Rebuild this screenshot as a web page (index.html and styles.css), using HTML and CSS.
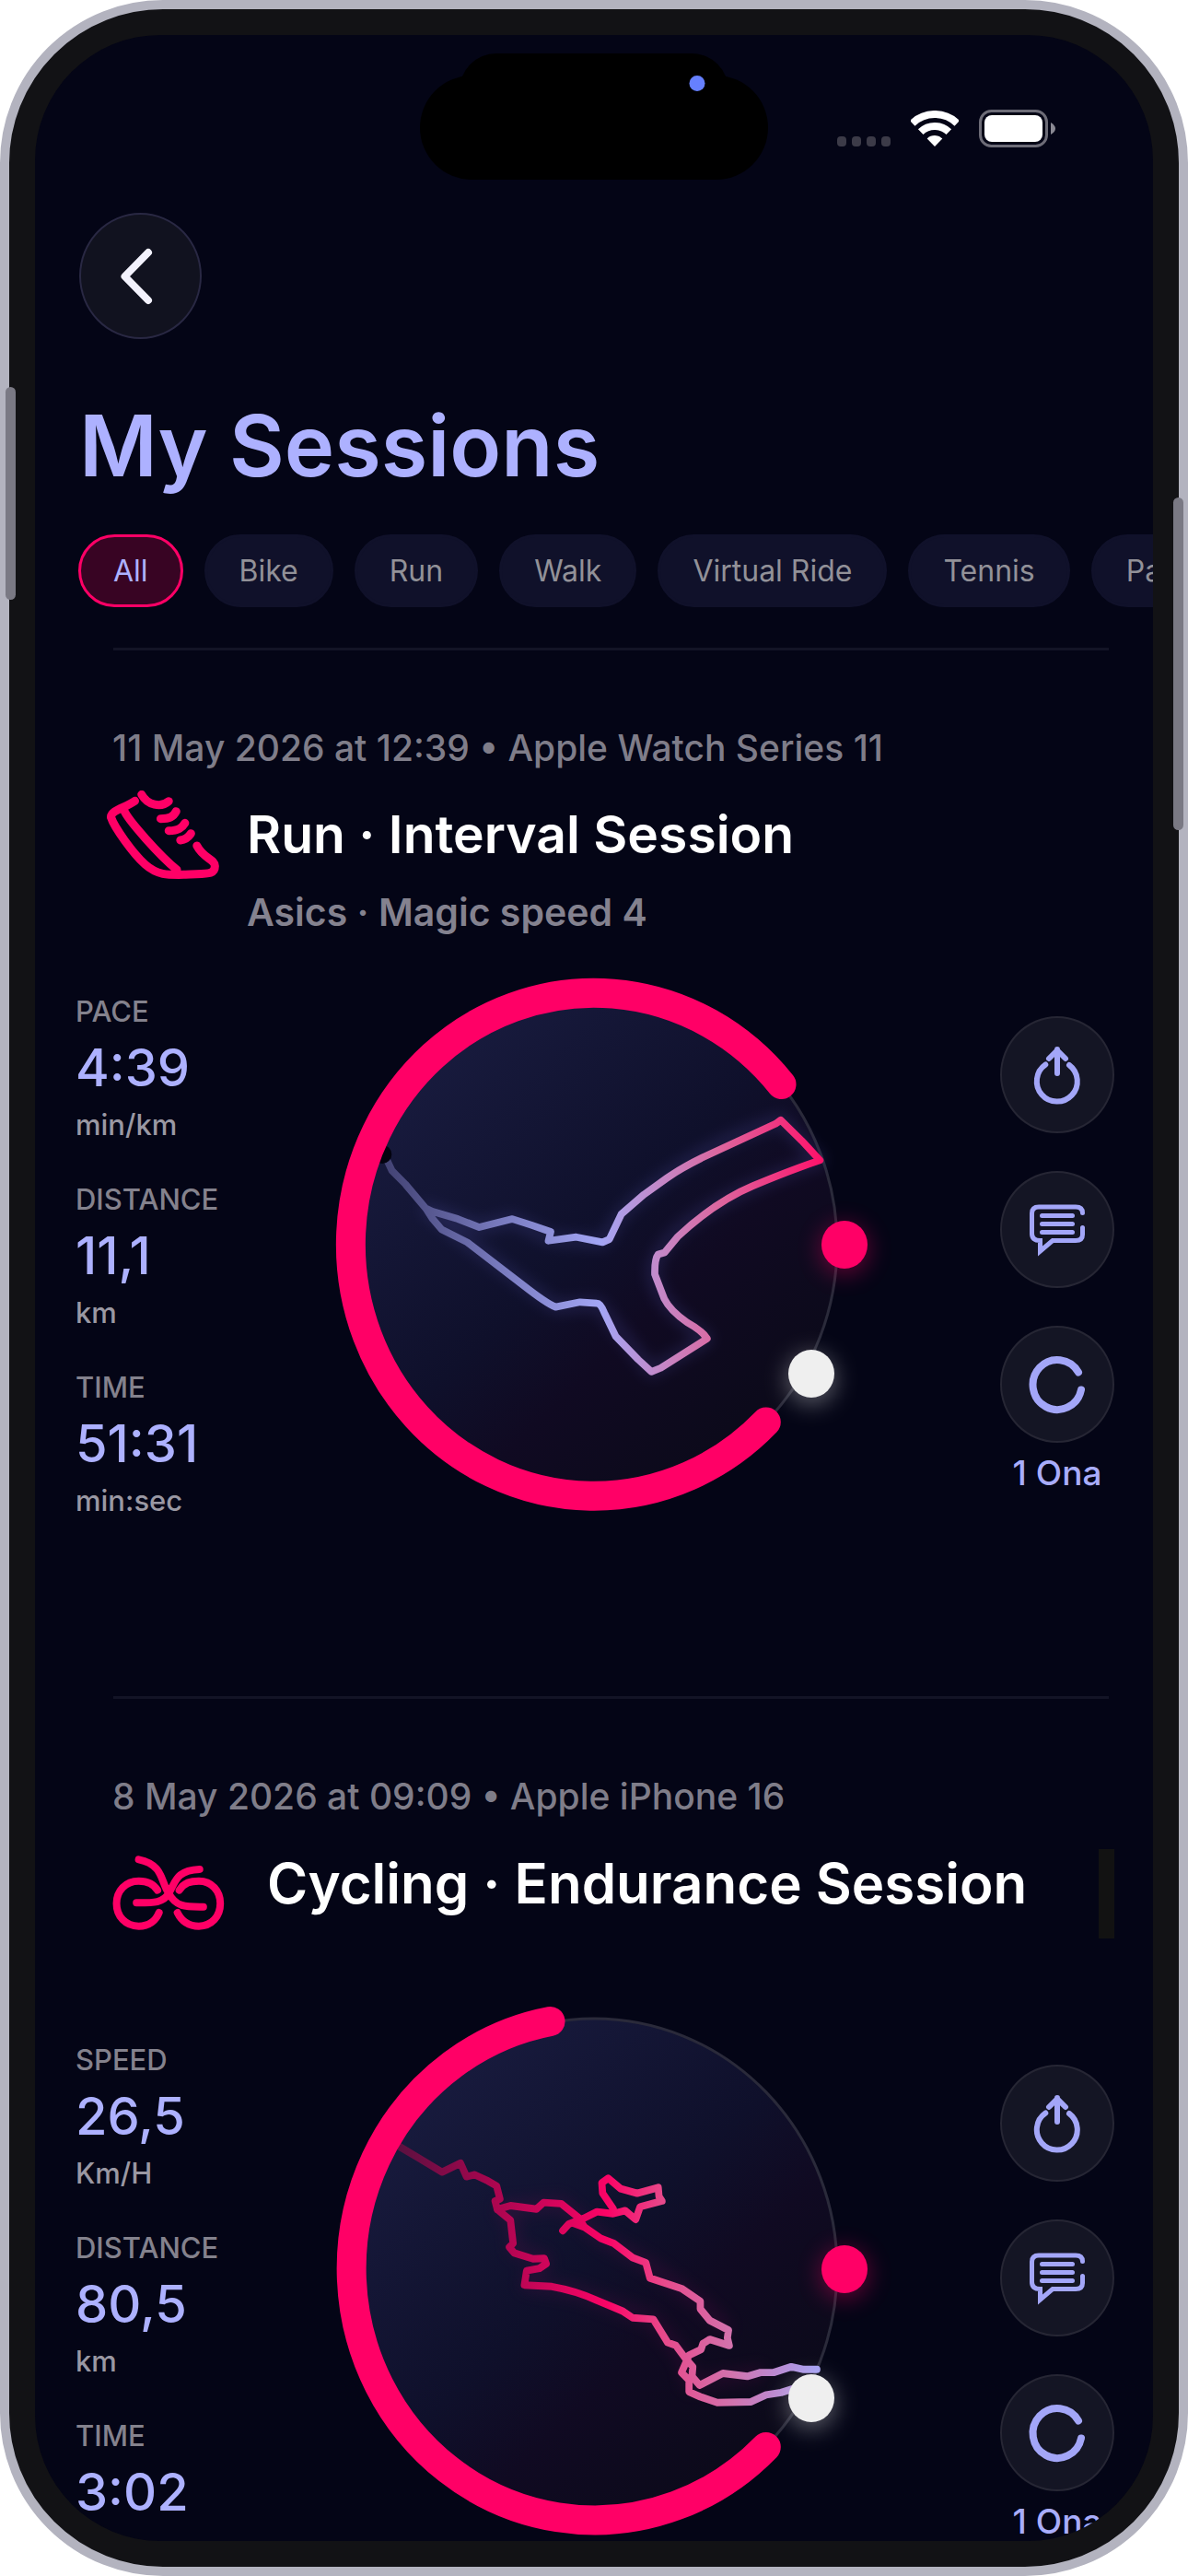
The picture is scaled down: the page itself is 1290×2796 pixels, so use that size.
FILE: index.html
```html
<!DOCTYPE html>
<html lang="en">
<head>
<meta charset="utf-8">
<meta name="viewport" content="width=device-width, initial-scale=1">
<title>My Sessions</title>
<link rel="stylesheet" href="styles.css">
</head>
<body>
<svg class="defs" aria-hidden="true">
  <defs>
    <linearGradient id="disc" x1="0.1" y1="0.1" x2="0.85" y2="0.9">
      <stop offset="0" stop-color="#191c40"/>
      <stop offset="0.5" stop-color="#0f102b"/>
      <stop offset="0.68" stop-color="#100a22"/>
      <stop offset="1" stop-color="#0b0a19"/>
    </linearGradient>
    <linearGradient id="routeRun" gradientUnits="userSpaceOnUse" x1="190" y1="0" x2="1360" y2="0">
      <stop offset="0" stop-color="#424273"/>
      <stop offset="0.27" stop-color="#7a7cc0"/>
      <stop offset="0.49" stop-color="#a3a6f5"/>
      <stop offset="0.62" stop-color="#c38aca"/>
      <stop offset="0.76" stop-color="#dc679f"/>
      <stop offset="1" stop-color="#ff1069"/>
    </linearGradient>
    <linearGradient id="routeRide" gradientUnits="userSpaceOnUse" x1="225" y1="0" x2="1340" y2="0">
      <stop offset="0" stop-color="#5a1140"/>
      <stop offset="0.2" stop-color="#a1064d"/>
      <stop offset="0.5" stop-color="#fb0466"/>
      <stop offset="0.63" stop-color="#e8488a"/>
      <stop offset="0.8" stop-color="#d274ae"/>
      <stop offset="1" stop-color="#a59ff2"/>
    </linearGradient>
    <filter id="glow" x="-100%" y="-100%" width="300%" height="300%">
      <feGaussianBlur stdDeviation="12"/>
    </filter>
    <symbol id="icon-share" viewBox="0 0 80 80">
      <path d="M27.3 28.5A22 22 0 1 0 53 29M40 38V12M31 22l9-9 9 9" fill="none" stroke="currentColor" stroke-width="6" stroke-linecap="round" stroke-linejoin="round"/>
    </symbol>
    <symbol id="icon-chat" viewBox="0 0 80 80">
      <path d="M67.500 21.500Q67.500 15 60 15H20Q12.500 15 12.500 22V44Q12.500 51.500 21.500 51.500V63L35 51.500H60Q67.500 51.500 67.500 45V37.500" fill="none" stroke="currentColor" stroke-width="5" stroke-linecap="round"/>
      <path d="M23.500 24.500H56.500M23.500 33.500H56.500M23.500 42.500H56.500" stroke="currentColor" stroke-width="5" stroke-linecap="round"/>
    </symbol>
    <symbol id="icon-ring" viewBox="0 0 80 80">
      <path d="M63 26.500A26.500 27 0 1 0 66 45.500" fill="none" stroke="currentColor" stroke-width="8" stroke-linecap="round"/>
    </symbol>
  </defs>
</svg>

<div class="phone">
  <span class="side-button side-left"></span>
  <span class="side-button side-right"></span>
  <main class="screen">
    <div class="island-top"></div>
    <div class="island"></div>
    <div class="camera"></div>

    <div class="status">
      <span class="signal"><i></i><i></i><i></i><i></i></span>
      <svg class="wifi" viewBox="0 0 52 40" aria-hidden="true">
        <path d="M1.700 13.800A35 35 0 0 1 50.300 13.800M10.700 23.200A22 22 0 0 1 41.300 23.200" fill="none" stroke="#fff" stroke-width="8"/>
        <path d="M26 39L17.700 30.400A12 12 0 0 1 34.300 30.400Z" fill="#fff"/>
      </svg>
      <svg class="battery" viewBox="0 0 83 41" aria-hidden="true">
        <rect x="1.500" y="1.500" width="72" height="38" rx="12" fill="none" stroke="#6d6c77" stroke-width="3"/>
        <rect x="6" y="6" width="63" height="29" rx="8" fill="#fff"/>
        <path d="M78 14Q83 17 83 20.500T78 27Z" fill="#8a8993"/>
      </svg>
    </div>

    <header class="top">
      <button class="back" type="button" aria-label="Back">
        <svg viewBox="0 0 40 64" aria-hidden="true"><path d="M32 6L6.500 32 32 58" fill="none" stroke="#f3f2fd" stroke-width="8" stroke-linecap="round" stroke-linejoin="round"/></svg>
      </button>
      <h1>My Sessions</h1>
    </header>

    <nav class="chips" aria-label="Session types">
      <button class="chip active" type="button">All</button>
      <button class="chip" type="button">Bike</button>
      <button class="chip" type="button">Run</button>
      <button class="chip" type="button">Walk</button>
      <button class="chip" type="button">Virtual Ride</button>
      <button class="chip" type="button">Tennis</button>
      <button class="chip" type="button">Padel</button>
    </nav>

    <article class="session">
      <p class="meta">11 May 2026 at 12:39 • Apple Watch Series 11</p>
      <div class="heading">
        <svg class="sport" viewBox="0 0 128 116" aria-hidden="true">
          <g transform="translate(-56 -138) scale(.3827 .3333)">
            <path d="M226 448C200 470 158 478 158 501C168 535 220 618 255 655C290 691 320 689 370 688C430 684 453 690 453 660C453 638 420 635 402 594M195 478C205 510 300 630 345 672M245 427C262 462 300 472 322 449M299 506C325 506 335 500 343 482M322 545C350 545 360 535 368 520M355 576C375 573 380 562 385 554"/>
          </g>
        </svg>
        <div class="titles">
          <h2>Run · Interval Session</h2>
          <p class="gear">Asics · Magic speed 4</p>
        </div>
      </div>
      <div class="body">
        <dl class="stats">
          <div><dt>PACE</dt><dd>4:39</dd><dd class="unit">min/km</dd></div>
          <div><dt>DISTANCE</dt><dd>11,1</dd><dd class="unit">km</dd></div>
          <div><dt>TIME</dt><dd>51:31</dd><dd class="unit">min:sec</dd></div>
        </dl>
        <svg class="track" viewBox="0 0 640 600" role="img" aria-label="Run route">
          <ellipse class="disc" cx="305" cy="301" rx="264" ry="272"/>
          <g transform="translate(0 -20) scale(.4082)">
            <path class="route-glow" stroke="#4a4a9a" d="M300 690L442 740 530 718 632 770 770 780 820 705Q1000 530 1244 455L1348 562Q1000 680 925 805Q850 900 1048 1036L900 1124 755 942 645 952 410 780Z"/>
            <path class="route" stroke="url(#routeRun)" d="M190 548L210 590 245 625 300 690 318 698 385 718 442 740 530 718 580 734 632 752 626 776 700 766 770 780 788 772 820 705 880 653 940 610Q980 582 1035 555L1230 465 1244 455 1300 510 1348 562Q1270 588 1170 630T970 765L935 807 918 812Q908 825 909 865L934 930Q950 962 995 993Q1035 1015 1048 1036L925 1114 900 1124 865 1092 805 1030 775 968Q765 942 755 942L710 939 645 952Q620 942 560 895L410 780 342 746 318 718 300 690"/>
            <circle cx="184" cy="546" r="25" fill="#03030f"/>
          </g>
          <path class="arc" d="M508.500 127A264 273 0 1 0 491.800 493.500"/>
          <ellipse cx="577" cy="306" rx="27" ry="28" fill="#ff0066" opacity=".35" filter="url(#glow)"/>
          <ellipse cx="577" cy="301" rx="25" ry="26" fill="#ff0066"/>
          <ellipse cx="541" cy="447" rx="27" ry="28" fill="#efefef" opacity=".35" filter="url(#glow)"/>
          <ellipse cx="541" cy="441" rx="25" ry="26" fill="#efefef"/>
        </svg>
        <div class="actions">
          <button class="action" type="button" aria-label="Share"><svg aria-hidden="true"><use href="#icon-share"/></svg></button>
          <button class="action" type="button" aria-label="Comments"><svg aria-hidden="true"><use href="#icon-chat"/></svg></button>
          <button class="action" type="button" aria-label="Give Ona"><svg aria-hidden="true"><use href="#icon-ring"/></svg></button>
          <span class="count">1 Ona</span>
        </div>
      </div>
    </article>

    <article class="session compact">
      <p class="meta">8 May 2026 at 09:09 • Apple iPhone 16</p>
      <div class="heading">
        <svg class="sport" viewBox="0 0 128 116" aria-hidden="true">
          <g transform="translate(-56 -96) scale(.4082 .3333)">
            <path d="M272 455C260 430 240 425 222 425C187 425 163 457 163 498C163 540 187 572 222 572C250 572 268 553 276 528M330 455C343 430 360 425 382 425C416 425 439 457 439 498C439 540 416 572 382 572C352 572 335 553 325 528M222 355C290 372 280 430 302 465C322 512 350 509 394 509M384 387C320 390 320 430 302 465C288 497 260 496 216 496"/>
          </g>
        </svg>
        <div class="titles">
          <h2>Cycling · Endurance Session</h2>
        </div>
        <span class="marker"></span>
      </div>
      <div class="body">
        <dl class="stats">
          <div><dt>SPEED</dt><dd>26,5</dd><dd class="unit">Km/H</dd></div>
          <div><dt>DISTANCE</dt><dd>80,5</dd><dd class="unit">km</dd></div>
          <div><dt>TIME</dt><dd>3:02</dd></div>
        </dl>
        <svg class="track" viewBox="0 0 640 600" role="img" aria-label="Ride route">
          <ellipse class="disc" cx="305" cy="301" rx="264" ry="272"/>
          <g transform="translate(0 -22) scale(.4082 .4184)">
            <path class="route-glow" stroke="#60104a" d="M490 615L530 640 535 720 620 750 565 810 700 830 905 905 985 1000 1000 1070 1200 1040M490 615L660 602 770 695 885 755 1030 860 1105 930"/>
            <path class="route" stroke="url(#routeRide)" d="M228 453L280 483 343 520 392 497 408 532 430 527 465 543 488 556 497 590 484 595 490 617 525 607 594 616 613 599 660 602 705 637 722 663 765 692 800 705 850 742 885 755 896 795 980 822 1030 855 1030 875 1055 905 1105 930 1102 950 1107 970 1055 954 1037 965 1032 980 1000 995 980 1040 1000 1060 1000 1090 1030 1103 1075 1118 1165 1116 1205 1098 1245 1092 1290 1078M490 617L525 645 532 705 522 715 535 730 585 745 615 744 620 758 602 770 568 776 562 813 635 817Q700 828 755 853L822 880 850 898 905 902 943 962 965 970 990 1003 1010 1025 1008 1050 1028 1073 1090 1042 1155 1050 1190 1040 1225 1040 1272 1025 1305 1032 1340 1032M664 672L680 655 720 640 755 623 798 628 830 620 858 643 870 610 928 595 920 583 918 560 862 575 818 563 785 536 768 548 770 575 798 615M690 652L722 663"/>
          </g>
          <path class="arc" d="M257.500 32A264 273 0 1 0 491.800 494"/>
          <ellipse cx="577" cy="306" rx="27" ry="28" fill="#ff0066" opacity=".35" filter="url(#glow)"/>
          <ellipse cx="577" cy="301" rx="25" ry="26" fill="#ff0066"/>
          <ellipse cx="541" cy="447" rx="27" ry="28" fill="#efefef" opacity=".35" filter="url(#glow)"/>
          <ellipse cx="541" cy="441" rx="25" ry="26" fill="#efefef"/>
        </svg>
        <div class="actions">
          <button class="action" type="button" aria-label="Share"><svg aria-hidden="true"><use href="#icon-share"/></svg></button>
          <button class="action" type="button" aria-label="Comments"><svg aria-hidden="true"><use href="#icon-chat"/></svg></button>
          <button class="action" type="button" aria-label="Give Ona"><svg aria-hidden="true"><use href="#icon-ring"/></svg></button>
          <span class="count">1 Ona</span>
        </div>
      </div>
    </article>
  </main>
</div>
</body>
</html>
```
FILE: styles.css
```css
* {
  box-sizing: border-box;
}

body {
  margin: 0;
  background: #fff;
  font-family: Inter, "Liberation Sans", sans-serif;
  color: #fff;
}

h1, h2, p, dl, dd {
  margin: 0;
}

button {
  font: inherit;
  cursor: pointer;
}

.defs {
  position: absolute;
  width: 0;
  height: 0;
}

/* Device frame */
.phone {
  position: relative;
  height: 100vh;
  padding: 28px;
  border: 10px solid #b3b3bf;
  border-radius: 177px;
  background: #121215;
}

.screen {
  position: relative;
  height: 100%;
  overflow: hidden;
  border-radius: 136px;
  background: #040516;
}

.side-button {
  position: absolute;
  width: 11px;
  border-radius: 6px;
  background: #7a7984;
}

.side-left {
  top: 410px;
  left: -4px;
  height: 231px;
}

.side-right {
  top: 530px;
  right: -5px;
  height: 361px;
}

.island-top,
.island,
.camera {
  position: absolute;
  left: 50%;
  transform: translateX(-50%);
  background: #000;
}

.island-top {
  top: 20px;
  width: 292px;
  height: 80px;
  border-radius: 40px;
}

.island {
  top: 44px;
  width: 378px;
  height: 113px;
  border-radius: 57px;
}

.camera {
  top: 44px;
  width: 17px;
  height: 17px;
  margin-left: 112px;
  border-radius: 50%;
  background: #6680ff;
}

.status {
  display: flex;
  justify-content: flex-end;
  height: 193px;
  padding: 81px 106px 0 0;
}

.signal {
  display: flex;
  gap: 6px;
  margin: 29px 22px 0 0;
}

.signal i {
  width: 10px;
  height: 11px;
  border-radius: 4px;
  background: #3c3b48;
}

.wifi {
  width: 52px;
  height: 40px;
  margin: 1px 22px 0 0;
}

.battery {
  width: 83px;
  height: 41px;
}

/* Header */
.top {
  padding: 0 48px;
}

.back {
  display: flex;
  align-items: center;
  justify-content: center;
  width: 133px;
  height: 137px;
  padding: 0 8px 0 0;
  border: 2px solid #292843;
  border-radius: 50%;
  background: #11121f;
}

.back svg {
  width: 40px;
  height: 64px;
}

h1 {
  margin-top: 56px;
  font-size: 92px;
  line-height: 120px;
  font-weight: 600;
  color: #adb1ff;
}

.chips {
  display: flex;
  gap: 23px;
  margin-top: 36px;
  padding-left: 47px;
  overflow: hidden;
}

.chip {
  flex: none;
  height: 79px;
  padding: 0 35px;
  border: 3px solid #10112a;
  border-radius: 40px;
  background: #10112a;
  color: #929198;
  font-size: 32px;
  line-height: 40px;
}

.chip.active {
  border-color: #ff0066;
  background: #380423;
  color: #adb1ff;
}

/* Session cards */
.session {
  display: flow-root;
  padding-bottom: 191px;
}

.session::before {
  content: "";
  display: block;
  height: 3px;
  margin: 0 48px 0 85px;
  background: #131426;
}

.chips + .session {
  margin-top: 44px;
}

.meta {
  margin-top: 82px;
  padding-left: 84px;
  font-size: 39px;
  line-height: 48px;
  font-weight: 500;
  color: #7f7d89;
}

.heading {
  display: flex;
  gap: 24px;
  margin-top: 22px;
  padding: 0 42px 0 78px;
}

.sport {
  flex: none;
  width: 128px;
  height: 116px;
}

.sport path {
  fill: none;
  stroke: #ff0066;
  stroke-width: 9px;
  stroke-linecap: round;
  stroke-linejoin: round;
  vector-effect: non-scaling-stroke;
}

.titles {
  flex: 1;
  padding-top: 12px;
  white-space: nowrap;
}

h2 {
  font-size: 57px;
  line-height: 72px;
  font-weight: 600;
}

.gear {
  margin-top: 24px;
  font-size: 41px;
  line-height: 48px;
  font-weight: 600;
  color: #84828f;
}

.marker {
  width: 17px;
  height: 97px;
  margin-top: 11px;
  background: #121212;
}

.body {
  display: flex;
  margin-top: 36px;
  padding: 0 42px 0 44px;
}

.stats {
  display: flex;
  flex-direction: column;
  gap: 45px;
  width: 258px;
  padding-top: 30px;
}

.stats dt {
  font-size: 31px;
  line-height: 36px;
  font-weight: 500;
  color: #84828d;
}

.stats dd {
  margin-top: 9px;
  font-size: 56px;
  line-height: 68px;
  font-weight: 500;
  color: #adb1ff;
}

.stats .unit {
  margin-top: 10px;
  font-size: 31px;
  line-height: 36px;
  color: #9a98a3;
}

.track {
  flex: 0 1 640px;
  min-width: 0;
  height: 600px;
}

.disc {
  fill: url(#disc);
  stroke: #2a2a3a;
  stroke-width: 3px;
}

.arc {
  fill: none;
  stroke: #ff0066;
  stroke-width: 32px;
  stroke-linecap: round;
}

.route {
  fill: none;
  stroke-width: 19px;
  stroke-linecap: round;
  stroke-linejoin: round;
}

.route-glow {
  fill: none;
  stroke-width: 30px;
  stroke-linejoin: round;
  opacity: .3;
  filter: blur(20px);
}

.actions {
  display: flex;
  flex-direction: column;
  align-items: center;
  gap: 41px;
  width: 124px;
  margin-left: auto;
  padding-top: 53px;
}

.action {
  flex: none;
  display: flex;
  align-items: center;
  justify-content: center;
  width: 124px;
  height: 127px;
  padding: 0;
  border: 2px solid #262634;
  border-radius: 50%;
  background: #141524;
  color: #a3a6f8;
}

.action svg {
  width: 80px;
  height: 80px;
}

.count {
  margin-top: -30px;
  font-size: 37px;
  line-height: 44px;
  font-weight: 500;
  color: #a9adfb;
  white-space: nowrap;
}

/* Card without a gear line */
.compact .heading {
  gap: 46px;
}

.compact h2 {
  font-size: 60px;
}

.compact .sport path {
  stroke-width: 8px;
}

.compact .body {
  margin-top: 50px;
}

.compact .stats {
  padding-top: 56px;
}

.compact .actions {
  padding-top: 79px;
}
```
